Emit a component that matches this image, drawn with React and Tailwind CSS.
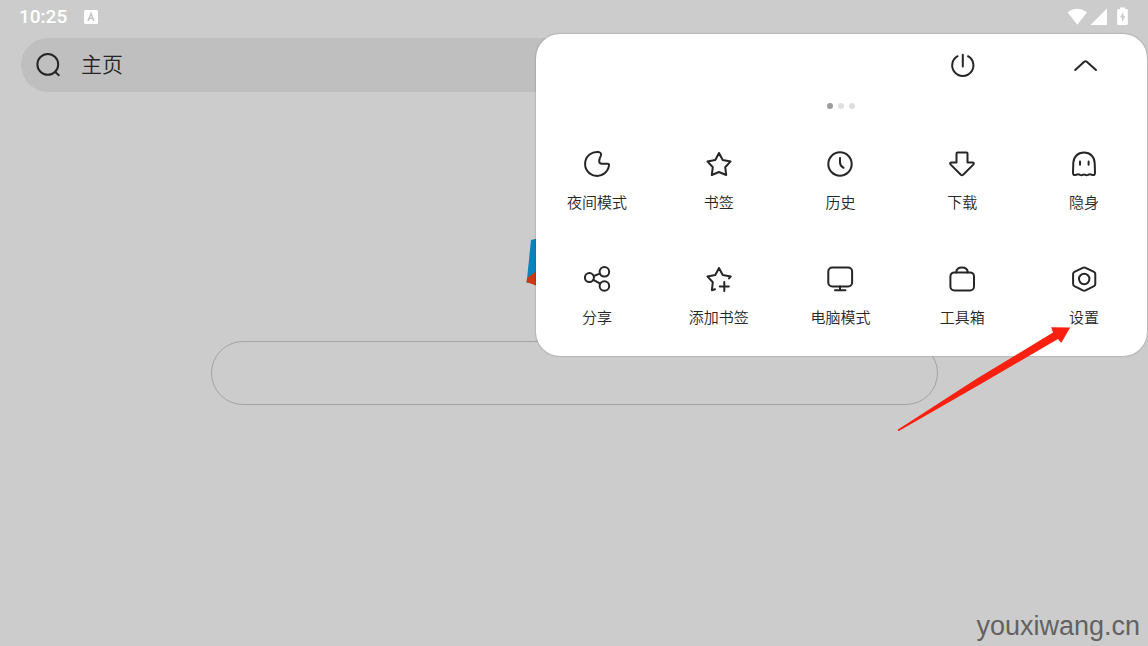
import React from "react";

const STAR = "M16 5 L19.7 12 L27.6 13.4 L22.2 19.2 L23.2 27 L16 24 L8.8 27 L9.8 19.2 L4.4 13.4 L12.3 12 Z";

const menuItems = [
  {
    label: "夜间模式",
    icon: (
      <path d="M17.4 4 A12 12 0 1 0 28 17.4 Q28.2 15.8 26.6 15.8 L20.8 15.7 Q17.9 15.4 18.2 12.5 Q18.5 10.4 19.9 7.6 Q20.9 4.7 17.4 4 Z" />
    ),
  },
  { label: "书签", icon: <path d={STAR} /> },
  {
    label: "历史",
    icon: (
      <>
        <circle cx="16" cy="16" r="11.7" />
        <path d="M16 10 V14.6 Q16.1 17.8 19.6 19.8" />
      </>
    ),
  },
  {
    label: "下载",
    icon: (
      <path d="M11.5 4.6 H20.5 Q21.5 4.6 21.5 5.6 V14.6 H26.4 Q28.8 14.8 27.3 16.6 L17.1 26.7 Q16 27.7 14.9 26.7 L4.7 16.6 Q3.2 14.8 5.6 14.6 H10.5 V5.6 Q10.5 4.6 11.5 4.6 Z" />
    ),
  },
  {
    label: "隐身",
    icon: (
      <>
        <path d="M16 4.6 C9.6 4.6 5.6 9 5.3 15 L5 24.8 Q5 27.9 8 26.8 Q10.2 25.8 12 26.8 Q13.4 27.5 14.6 26.8 Q16 26 17.4 26.8 Q18.6 27.5 20 26.8 Q21.8 25.8 24 26.8 Q27 27.9 27 24.8 L26.7 15 C26.4 9 22.4 4.6 16 4.6 Z" />
        <path d="M12 13.5 V16.8 M20.6 13.5 V16.8" />
      </>
    ),
  },
  {
    label: "分享",
    icon: (
      <>
        <circle cx="8.4" cy="14.6" r="4.5" />
        <circle cx="23.4" cy="8.8" r="4.8" />
        <circle cx="23.4" cy="23" r="4.8" />
        <path d="M12.8 13 L18.8 10.6 M12.4 16.8 L19.2 20.6" />
      </>
    ),
  },
  {
    label: "添加书签",
    icon: (
      <>
        <path d="M26 15.4 L27.8 13.4 L19.7 12 L16 5 L12.3 12 L4.4 13.4 L9.8 19.2 L8.9 27.2 L12 26.2" />
        <path d="M21.3 19 V28 M16.8 23.5 H25.8" />
      </>
    ),
  },
  {
    label: "电脑模式",
    icon: (
      <>
        <rect x="4.3" y="4.6" width="23.8" height="18.8" rx="4" />
        <path d="M16 23.4 V27 M11 27.2 H21.4" />
      </>
    ),
  },
  {
    label: "工具箱",
    icon: (
      <>
        <rect x="4.4" y="9.4" width="23.6" height="18" rx="4" />
        <path d="M10.2 9.4 C10.4 6.2 12.6 4.4 16 4.4 C19.4 4.4 21.6 6.2 21.8 9.4" />
      </>
    ),
  },
  {
    label: "设置",
    icon: (
      <>
        <path d="M14.8 4.8 Q16.2 4.1 17.6 4.8 L26 8.8 Q27.3 9.5 27.3 11 V21 Q27.3 22.5 26 23.2 L17.6 27.3 Q16.2 28 14.8 27.3 L6.4 23.2 Q5.1 22.5 5.1 21 V11 Q5.1 9.5 6.4 8.8 Z" />
        <circle cx="16.2" cy="16" r="5.2" />
      </>
    ),
  },
];

function LineIcon({ children }) {
  return (
    <svg
      viewBox="0 0 32 32"
      className="size-8 fill-none stroke-[#262626] stroke-2"
      strokeLinecap="round"
      strokeLinejoin="round"
      aria-hidden="true"
    >
      {children}
    </svg>
  );
}

function StatusBar() {
  return (
    <header className="flex h-[33px] items-center justify-between px-[19px] text-white">
      <div className="flex items-center gap-4">
        <time className="font-[Roboto,sans-serif] text-[19px] leading-6 font-medium">10:25</time>
        <svg viewBox="0 0 16 16" className="size-4" aria-hidden="true">
          <rect x="1" y="1" width="14" height="14" rx="1.5" fill="#fff" />
          <path d="M5 12 L8 4.5 L11 12 M6.2 9.6 H9.8" fill="none" stroke="#c4c4c4" strokeWidth="1.5" />
        </svg>
      </div>
      <svg viewBox="0 0 62 20" className="h-5 w-[62px]" fill="#fff" aria-hidden="true">
        <path d="M0.5 5.2 Q10 -1.6 20 5.2 L10.3 17.8 Z" />
        <path d="M40 1.5 V18 H23.5 Z" />
        <path
          fillRule="evenodd"
          d="M53 2 V0.5 H58 V2 H59.5 Q60.8 2 60.8 3.3 V16.7 Q60.8 18 59.5 18 H51.5 Q50.2 18 50.2 16.7 V3.3 Q50.2 2 51.5 2 Z M56.4 4.8 L52.8 10.6 H55 V15.2 L58.4 9.2 H56.4 Z"
        />
      </svg>
    </header>
  );
}

function MenuPanel() {
  return (
    <section
      aria-label="菜单"
      className="absolute top-[34px] right-px w-[611px] max-w-full rounded-3xl bg-white pr-0.5 pb-[26px] shadow-[0_0_2px_rgba(0,0,0,0.35)]"
    >
      <div className="grid h-16 grid-cols-5 items-center justify-items-center">
        <button type="button" aria-label="退出" className="col-start-4">
          <LineIcon>
            <path d="M11.6 6.2 A10.6 10.6 0 1 0 22 6.2 M16.8 4.8 V16.4" />
          </LineIcon>
        </button>
        <button type="button" aria-label="收起" className="col-start-5">
          <LineIcon>
            <path d="M7.2 20 L16.2 11.8 Q17.5 10.8 18.8 11.8 L28 20" />
          </LineIcon>
        </button>
      </div>
      <div className="flex h-4 items-center justify-center gap-[5px]">
        <span className="size-1.5 rounded-full bg-[#9c9c9c]" />
        <span className="size-1.5 rounded-full bg-[#dedede]" />
        <span className="size-1.5 rounded-full bg-[#dedede]" />
      </div>
      <nav className="mt-[34px] grid grid-cols-5 gap-y-12">
        {menuItems.map((item) => (
          <button
            key={item.label}
            type="button"
            className="flex h-[67px] flex-col items-center gap-3 text-[15px] leading-5 font-[350] text-[#262626]"
          >
            <LineIcon>{item.icon}</LineIcon>
            <span>{item.label}</span>
          </button>
        ))}
      </nav>
    </section>
  );
}

export default function App() {
  return (
    <div className="relative flex min-h-screen flex-col overflow-hidden bg-[#cccccc] font-['Noto_Sans_CJK_SC',sans-serif]">
      <StatusBar />
      <div className="mx-[21px] mt-[5px] flex h-[54px] items-center gap-4 rounded-full bg-[#bfbfbf] pl-3">
        <svg
          viewBox="0 0 32 32"
          className="size-8 fill-none stroke-[#262626] stroke-2"
          strokeLinecap="round"
          aria-hidden="true"
        >
          <circle cx="14.8" cy="15.4" r="10.4" />
          <path d="M22 22.8 L25.8 26.2" />
        </svg>
        <h1 className="pb-1 text-[21px] leading-8 font-[350] text-[#262626]">主页</h1>
      </div>

      <main className="flex flex-col items-center pt-[147px]">
        <svg viewBox="0 0 96 48" className="h-12 w-24" aria-hidden="true">
          <path d="M5 1 L9 0 H90 V44 H0.6 Z" fill="#0a84bd" />
          <path d="M0.6 43 L1 39 L9 33 L90 32 V48 H14 Z" fill="#cb3a12" />
        </svg>
        <input
          type="text"
          aria-label="搜索"
          className="mt-[54px] h-16 w-[727px] max-w-full rounded-full border border-[#a3a3a3] bg-transparent px-8 text-xl outline-none"
        />
      </main>

      <footer className="mt-auto pr-2 pb-1 text-right font-['Liberation_Sans',sans-serif] text-[27px] leading-8 text-[#626262]">
        youxiwang.cn
      </footer>

      <MenuPanel />

      <svg
        viewBox="0 0 174 106"
        className="pointer-events-none absolute top-[326px] right-[77px] h-[106px] w-[174px]"
        aria-hidden="true"
      >
        <path d="M0.6 103.8 L80 52.4 L156 6.6 L154.2 1.2 L173.2 1.4 L164.2 17 L161 13 L82 59 L1.4 105.2 Z" fill="#f9200f" />
      </svg>
    </div>
  );
}
